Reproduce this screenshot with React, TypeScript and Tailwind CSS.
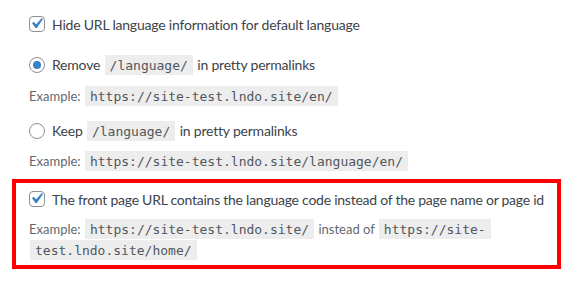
import React from "react";

const Check = () => (
  <span className="relative inline-block h-4 w-4 shrink-0 rounded-[4px] border border-[#8c8f94] bg-white">
    <svg viewBox="0 0 20 20" className="absolute left-[-4px] top-[-4px] h-[21px] w-[21px]">
      <path d="M14.83 4.89l1.34.94-5.81 8.38H9.02L5.78 9.67l1.34-1.25 2.57 2.4z" fill="#3582c4" />
    </svg>
  </span>
);

const Radio = ({ on }: { on?: boolean }) => (
  <span className="inline-flex h-4 w-4 shrink-0 items-center justify-center rounded-full border border-[#8c8f94] bg-white">
    {on && <span className="h-2 w-2 rounded-full bg-[#3582c4]" />}
  </span>
);

const Code = ({ children }: { children: React.ReactNode }) => (
  <code className="mx-[1px] bg-[#ededed] px-[5px] pt-[3px] pb-[2px] text-[13px] tracking-normal text-[#50575e] [font-family:'DejaVu_Sans_Mono',monospace] [box-decoration-break:clone]">
    {children}
  </code>
);

export default function App() {
  return (
    <div className="h-[285px] w-[565px] bg-white text-[14px] text-[#3c434a] [font-family:'Lato',sans-serif]">
      <div className="pl-[29px] pt-[15px]">
        <label className="flex h-[18px] items-center gap-[7px] tracking-[-0.2px]">
          <Check />
          <span>Hide URL language information for default language</span>
        </label>
        <label className="mt-[23px] flex h-[18px] items-center gap-[7px] tracking-[-0.2px]">
          <Radio on />
          <span>
            Remove <Code>/language/</Code> in pretty permalinks
          </span>
        </label>
        <p className="mt-[13px] flex h-[20px] items-center text-[13px] text-[#646970]">
          <span>
            Example: <Code>https://site-test.lndo.site/en/</Code>
          </span>
        </p>
        <label className="mt-[15px] flex h-[18px] items-center gap-[7px] tracking-[-0.2px]">
          <Radio />
          <span>
            Keep <Code>/language/</Code> in pretty permalinks
          </span>
        </label>
        <p className="mt-[12px] flex h-[20px] items-center text-[13px] text-[#646970]">
          <span>
            Example: <Code>https://site-test.lndo.site/language/en/</Code>
          </span>
        </p>
      </div>
      <div className="ml-[12px] mt-[7px] h-[90px] w-[549px] border-4 border-[#ff0000] pl-[13px] pt-[7px]">
        <label className="flex h-[18px] items-center gap-[7px] tracking-[-0.25px]">
          <Check />
          <span className="whitespace-nowrap">The front page URL contains the language code instead of the page name or page id</span>
        </label>
        <p className="mt-[11px] w-[470px] text-[13px] leading-[20px] text-[#646970]">
          Example: <Code>https://site-test.lndo.site/</Code> instead of <Code>https://site-test.lndo.site/home/</Code>
        </p>
      </div>
    </div>
  );
}
